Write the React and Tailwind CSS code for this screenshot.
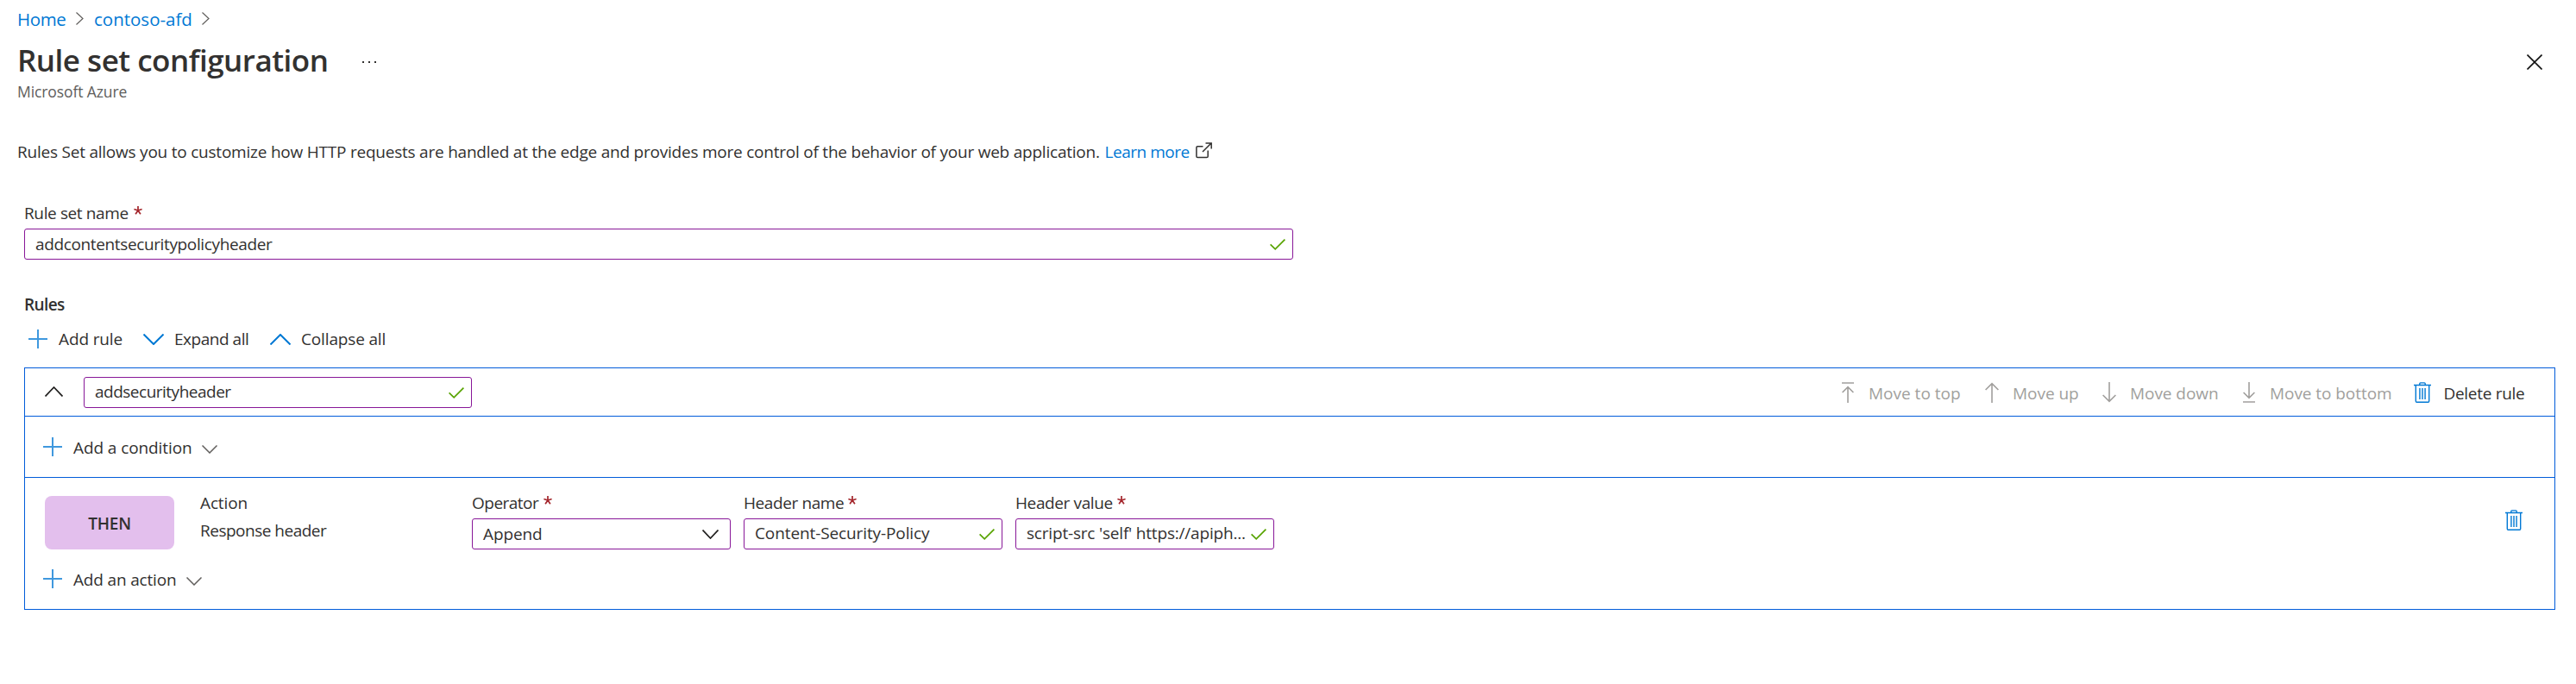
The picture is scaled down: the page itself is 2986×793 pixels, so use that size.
const Chevron = ({ className, w, h, dir = "down", sw = 1.5 }) => {
  const points = {
    down: `0.5,0.5 ${w / 2},${h - 1} ${w - 0.5},0.5`,
    up: `0.5,${h - 0.5} ${w / 2},1 ${w - 0.5},${h - 0.5}`,
    right: `0.5,0.5 ${w - 1},${h / 2} 0.5,${h - 0.5}`,
  }[dir];
  return (
    <svg className={`shrink-0 ${className}`} width={w} height={h} fill="none" stroke="currentColor" strokeWidth={sw}>
      <polyline points={points} />
    </svg>
  );
};

const Plus = ({ className = "" }) => (
  <svg className={`shrink-0 text-[#3f98de] ${className}`} width="22" height="22" fill="none" stroke="currentColor" strokeWidth="2">
    <path d="M0 11H22M11 0V22" />
  </svg>
);

const Check = () => (
  <svg className="shrink-0 text-[#57a300]" width="18" height="13" fill="none" stroke="currentColor" strokeWidth="1.7">
    <polyline points="0.6,6.3 6.2,11.8 17.4,0.7" />
  </svg>
);

const Trash = ({ className = "" }) => (
  <svg className={`shrink-0 text-[#0078d4] ${className}`} width="20" height="24" fill="none" stroke="currentColor">
    <path d="M0 3.5H20" strokeWidth="1.5" />
    <path d="M6.8 3V1.8Q6.8 0.9 7.7 0.9H12.3Q13.2 0.9 13.2 1.8V3" strokeWidth="1.4" />
    <path d="M2.3 4V22Q2.3 23.2 3.4 23.2H16.6Q17.7 23.2 17.7 22V4" strokeWidth="1.4" />
    <path d="M6.9 7V20M10 7V20M13.1 7V20" strokeWidth="1.8" opacity="0.78" />
  </svg>
);

const Arrow = ({ className = "", w, d }) => (
  <svg className={`shrink-0 text-[#a19f9d] ${className}`} width={w} height="24" fill="none" stroke="currentColor" strokeWidth="1.6">
    <path d={d} />
  </svg>
);

const Label = ({ className, children }) => (
  <div className="flex whitespace-nowrap leading-[26px]">
    <span className={className}>{children}</span>
    <svg className="mt-[5px] shrink-0 text-[#a4262c]" width="10" height="10" stroke="currentColor" strokeWidth="1.7">
      <path d="M5 0V5M0.4 3.5L5 5M9.6 3.5L5 5M2.1 9.2L5 5M7.9 9.2L5 5" />
    </svg>
  </div>
);

const Field = ({ className, children }) => (
  <div className={`flex h-9 shrink-0 items-center justify-between rounded-[3px] border border-[#881798] bg-white pl-3 whitespace-nowrap ${className}`}>
    {children}
  </div>
);

export default function App() {
  return (
    <div className="h-[793px] w-[2986px] overflow-hidden bg-white font-['Open_Sans','Noto_Sans',sans-serif] text-[19px] leading-[26px] text-[#323130]">
      <nav className="flex h-[35px] items-start pt-[9px] pl-5 text-[20.5px] whitespace-nowrap text-[#0078d4]">
        <a className="w-[68px] tracking-[-0.4px]">Home</a>
        <Chevron className="mt-[5px] text-[#605e5c]" w={9} h={15} dir="right" sw={1.2} />
        <a className="ml-3 w-[125px]">contoso-afd</a>
        <Chevron className="mt-[5px] text-[#605e5c]" w={9} h={15} dir="right" sw={1.2} />
      </nav>

      <header className="mt-[11px] flex h-12 items-start pl-5">
        <h1 className="w-[400px] text-[35px] leading-[48px] font-semibold tracking-[-0.5px] whitespace-nowrap">Rule set configuration</h1>
        <svg className="mt-[25px]" width="16" height="3" fill="#323130">
          <rect x="0" y="0" width="2" height="2" />
          <rect x="7" y="0" width="2" height="2" />
          <rect x="14" y="0" width="2" height="2" />
        </svg>
        <svg className="mt-[17px] mr-[39px] ml-auto" width="18" height="18" stroke="#111" strokeWidth="1.6">
          <path d="M0.5 0.5L17.5 17.5M17.5 0.5L0.5 17.5" />
        </svg>
      </header>
      <div className="pl-5 text-[17.5px] leading-6 tracking-[-0.1px] text-[#605e5c]">Microsoft Azure</div>

      <div className="mt-[45px] flex pl-5 whitespace-nowrap">
        <span className="w-[1260.5px] tracking-[-0.224px]">
          Rules Set allows you to customize how HTTP requests are handled at the edge and provides more control of the behavior of your web application.
        </span>
        <a className="w-[105px] tracking-[-0.476px] text-[#0078d4]">Learn more</a>
        <svg className="mt-[2px]" width="19" height="19" fill="none" stroke="#323130" strokeWidth="1.5">
          <path d="M8.5 4.7H2.2Q0.9 4.7 0.9 6V16.2Q0.9 17.6 2.2 17.6H12.8Q14.2 17.6 14.2 16.2V9.5" />
          <path d="M8 11L18 1M11.5 0.9H18.2V7.5" />
        </svg>
      </div>

      <main className="pl-7">
        <div className="mt-[45px]">
          <Label className="w-[127px] tracking-[-0.376px]">Rule set name</Label>
        </div>
        <Field className="mt-[5px] w-[1471px] pr-2">
          <span className="tracking-[-0.366px]">addcontentsecuritypolicyheader</span>
          <Check />
        </Field>

        <h2 className="mt-[39px] font-semibold tracking-[-0.6px]">Rules</h2>

        <div className="mt-[14px] flex h-[26px] items-center pl-[5px] whitespace-nowrap">
          <Plus className="-mt-px" />
          <span className="ml-[13px] w-[98px] tracking-[-0.13px]">Add rule</span>
          <Chevron className="text-[#0078d4]" w={24} h={13} sw={2} />
          <span className="ml-[12px] w-[111px] tracking-[-0.472px]">Expand all</span>
          <Chevron className="text-[#0078d4]" w={24} h={13} sw={2} dir="up" />
          <span className="ml-[12px] tracking-[-0.153px]">Collapse all</span>
        </div>

        <section className="mt-5 h-[281px] w-[2934px] border border-[#015cda]">
          <div className="flex h-14 items-start border-b border-[#015cda] whitespace-nowrap">
            <Chevron className="mt-[21px] ml-[23px] text-[#201f1e]" w={21} h={12} sw={1.7} dir="up" />
            <Field className="mt-[10px] ml-6 w-[450px] pr-2">
              <span className="-mt-[2px] tracking-[-0.5px]">addsecurityheader</span>
              <Check />
            </Field>
            <div className="mt-4 ml-auto flex w-[826px] text-[#a19f9d]">
              <Arrow w={14} d="M0 1H14M7 24V6M0.6 12L7 5.6L13.4 12" />
              <span className="ml-[17px] w-[135px]">Move to top</span>
              <Arrow w={16} d="M8 24V2M0.6 9L8 1.6L15.4 9" />
              <span className="ml-[16px] w-[104px] tracking-[-0.044px]">Move up</span>
              <Arrow w={16} d="M8 0V22M0.6 15L8 22.4L15.4 15" />
              <span className="ml-[16px] w-[131px] tracking-[-0.049px]">Move down</span>
              <Arrow w={14} d="M0 23H14M7 0V18M0.6 12L7 18.4L13.4 12" />
              <span className="ml-[17px] w-[167px] tracking-[-0.06px]">Move to bottom</span>
              <Trash />
              <span className="ml-[14.5px] tracking-[-0.301px] text-[#323130]">Delete rule</span>
            </div>
          </div>

          <div className="flex h-[71px] items-start border-b border-[#015cda] pl-[21px] whitespace-nowrap">
            <Plus className="mt-6" />
            <span className="mt-[23px] ml-[13px] w-[149px] tracking-[-0.092px]">Add a condition</span>
            <Chevron className="mt-[33px] text-[#605e5c]" w={18} h={10} sw={1.5} />
          </div>

          <div className="flex h-[83px] items-start whitespace-nowrap">
            <div className="mt-[21px] ml-[23px] flex h-[62px] w-[150px] items-center justify-center rounded-lg bg-[#e3bfed] font-semibold tracking-[-0.2px]">
              <span className="mt-[2px]">THEN</span>
            </div>
            <div className="mt-4 ml-[30px] flex w-[315px] flex-col gap-[6px]">
              <span className="tracking-[-0.123px]">Action</span>
              <span className="tracking-[-0.499px]">Response header</span>
            </div>
            <div className="mt-4 flex gap-[15px]">
              <div>
                <Label className="w-[83px] tracking-[-0.514px]">Operator</Label>
                <Field className="mt-[5px] w-[300px] pr-[13px]">
                  <span className="tracking-[-0.117px]">Append</span>
                  <Chevron className="text-[#201f1e]" w={19} h={11} sw={1.7} />
                </Field>
              </div>
              <div>
                <Label className="w-[121px] tracking-[-0.403px]">Header name</Label>
                <Field className="mt-[5px] w-[300px] pr-2">
                  <span className="-mt-[2px] tracking-[-0.109px]">Content-Security-Policy</span>
                  <Check />
                </Field>
              </div>
              <div>
                <Label className="w-[118px] tracking-[-0.384px]">Header value</Label>
                <Field className="mt-[5px] w-[300px] pr-2">
                  <span className="-mt-[2px] tracking-[-0.191px]">script-src 'self' https://apiph...</span>
                  <Check />
                </Field>
              </div>
            </div>
            <Trash className="mt-[37px] mr-[37px] ml-auto" />
          </div>

          <div className="flex items-start pl-[21px] whitespace-nowrap">
            <Plus className="mt-[23px]" />
            <span className="mt-[22px] ml-[13px] w-[131px] tracking-[-0.167px]">Add an action</span>
            <Chevron className="mt-[32px] text-[#605e5c]" w={18} h={10} sw={1.5} />
          </div>
        </section>
      </main>
    </div>
  );
}
